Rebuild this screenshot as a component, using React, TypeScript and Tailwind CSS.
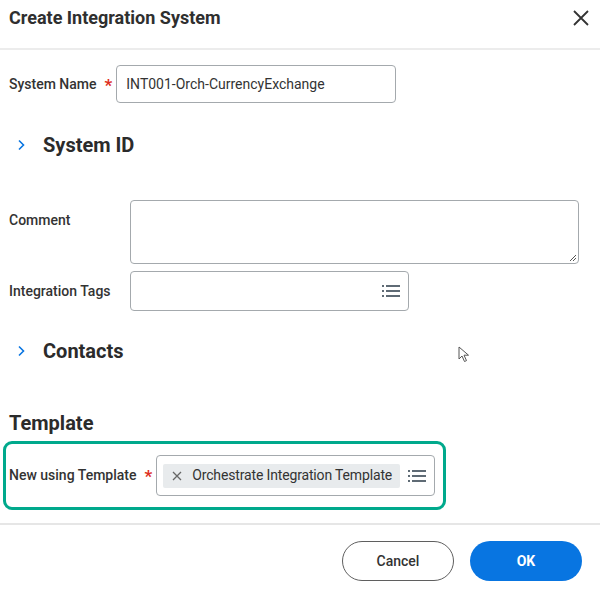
import React from "react";

const ListIcon = () => (
  <svg width="18" height="14" viewBox="0 0 18 14" fill="none">
    <rect x="0" y="1" width="2" height="2" fill="#5f6b75" />
    <rect x="0" y="6" width="2" height="2" fill="#5f6b75" />
    <rect x="0" y="11" width="2" height="2" fill="#5f6b75" />
    <rect x="4" y="1" width="14" height="2" fill="#5f6b75" />
    <rect x="4" y="6" width="14" height="2" fill="#5f6b75" />
    <rect x="4" y="11" width="14" height="2" fill="#5f6b75" />
  </svg>
);

const Chevron = () => (
  <svg width="8" height="12" viewBox="0 0 8 12" fill="none">
    <path d="M2 1.5 L6.5 6 L2 10.5" stroke="#0875e1" strokeWidth="1.6" />
  </svg>
);

const Star = () => <span className="text-[#de2e21] font-bold text-[17px] leading-none ml-[8px] mt-[2px]">*</span>;

export default function App() {
  return (
    <div
      className="relative w-[600px] h-[590px] bg-white text-[#333333] overflow-hidden"
      style={{ fontFamily: "Roboto, 'Liberation Sans', sans-serif" }}
    >
      {/* header */}
      <div className="h-[50px] border-b-2 border-[#ececec] flex items-start justify-between pl-[9px] pr-[10px] pt-[6px]">
        <h1 className="text-[18px] font-bold text-[#2f2f2f] leading-[24px]">Create Integration System</h1>
        <svg width="18" height="18" viewBox="0 0 18 18" className="mt-[3px]">
          <path d="M2 2 L16 16 M16 2 L2 16" stroke="#333" strokeWidth="1.8" />
        </svg>
      </div>

      {/* system name */}
      <div className="flex items-center mt-[15px] pl-[9px]">
        <span className="text-[14px] font-medium">System Name</span>
        <Star />
        <div className="ml-[4px] w-[280px] h-[38px] border border-[#a4a9ad] rounded-[4px] flex items-center pl-[9px] text-[14px] text-[#333]">
          INT001-Orch-CurrencyExchange
        </div>
      </div>

      {/* System ID */}
      <div className="flex items-center mt-[28px] h-[28px] pl-[17px]">
        <Chevron />
        <span className="ml-[18px] text-[20px] font-bold text-[#2b2b2b]">System ID</span>
      </div>

      {/* Comment */}
      <div className="flex mt-[41px] pl-[9px]">
        <span className="w-[121px] text-[14px] font-medium pt-[10px]">Comment</span>
        <div className="relative w-[449px] h-[64px] border border-[#a4a9ad] rounded-[4px]">
          <svg width="8" height="8" viewBox="0 0 8 8" className="absolute right-[1px] bottom-[1px]">
            <path d="M7 1 L1 7 M7 4 L4 7" stroke="#555" strokeWidth="1" />
          </svg>
        </div>
      </div>

      {/* Integration Tags */}
      <div className="flex items-center mt-[7px] pl-[9px]">
        <span className="w-[121px] text-[14px] font-medium">Integration Tags</span>
        <div className="w-[279px] h-[40px] border border-[#a4a9ad] rounded-[4px] flex items-center justify-end pr-[8px]">
          <ListIcon />
        </div>
      </div>

      {/* Contacts */}
      <div className="flex items-center mt-[26px] h-[28px] pl-[17px]">
        <Chevron />
        <span className="ml-[18px] text-[20px] font-bold text-[#2b2b2b]">Contacts</span>
      </div>

      {/* Template */}
      <div className="mt-[44px] h-[28px] pl-[9px] flex items-center">
        <span className="text-[20px] font-bold text-[#2b2b2b]">Template</span>
      </div>

      <div className="ml-[3px] mt-[4px] w-[443px] h-[69px] border-[3px] border-[#00a98c] rounded-[9px] flex items-center pl-[3px]">
        <span className="text-[14px] font-medium">New using Template</span>
        <Star />
        <div className="ml-[4px] w-[279px] h-[41px] border border-[#a4a9ad] rounded-[4px] flex items-center pl-[6px] pr-[8px] justify-between">
          <div className="h-[24px] bg-[#e8ebed] rounded-[2px] flex items-center pl-[9px] pr-[8px] text-[14px] tracking-[-0.15px] text-[#333]">
            <svg width="10" height="10" viewBox="0 0 10 10" className="mr-[10px]">
              <path d="M1 1 L9 9 M9 1 L1 9" stroke="#666" strokeWidth="1.3" />
            </svg>
            Orchestrate Integration Template
          </div>
          <ListIcon />
        </div>
      </div>

      {/* footer */}
      <div className="mt-[13px] border-t-2 border-[#e6e6e6] flex justify-end gap-[16px] pr-[18px] pt-[16px]">
        <button className="w-[112px] h-[40px] rounded-full border-[1.5px] border-[#5f5f5f] text-[14px] font-medium text-[#333] bg-white">
          Cancel
        </button>
        <button className="w-[112px] h-[40px] rounded-full bg-[#0875e1] text-[14px] font-bold text-white">
          OK
        </button>
      </div>

      {/* mouse cursor */}
      <svg width="12" height="17" viewBox="0 0 12 17" className="absolute left-[458px] top-[346px]">
        <path d="M1 1 L1 13 L4 10 L6.5 15.5 L8.5 14.6 L6 9.2 L10.5 9.2 Z" fill="white" stroke="#555" strokeWidth="1" />
      </svg>
    </div>
  );
}
